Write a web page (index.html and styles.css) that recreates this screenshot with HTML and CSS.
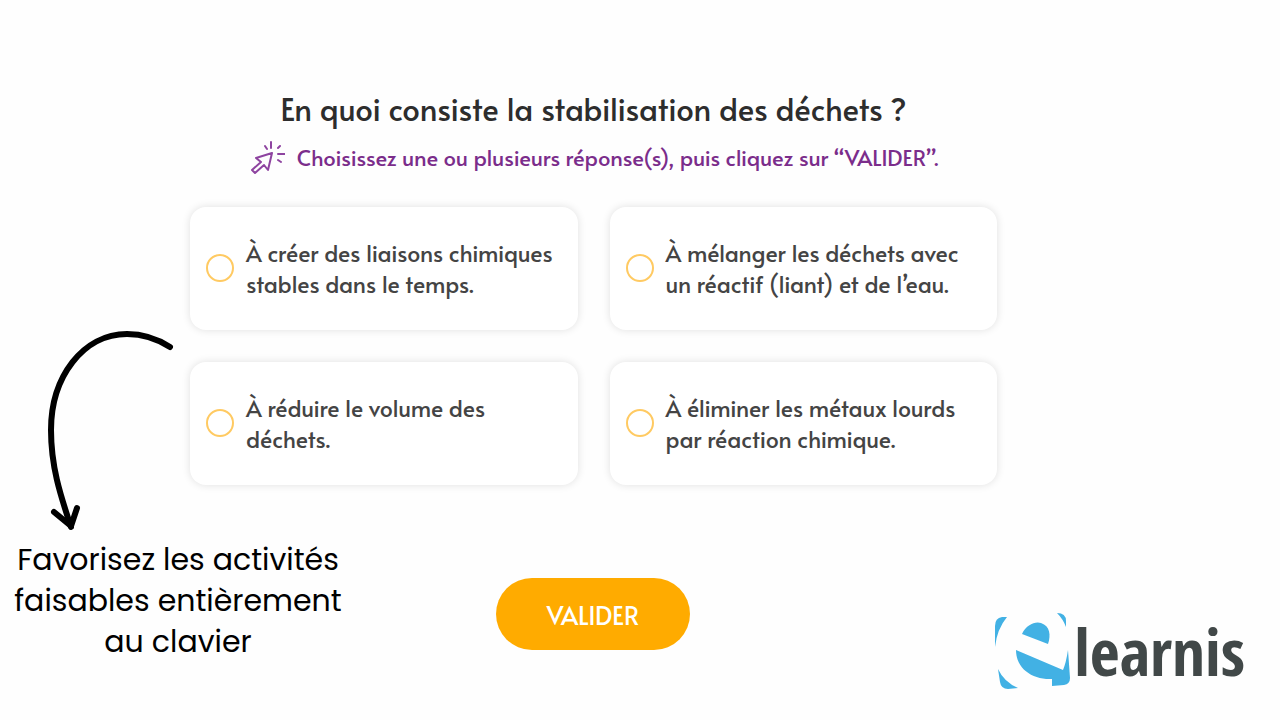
FILE: index.html
```html
<!DOCTYPE html>
<html lang="fr">
<head>
  <meta charset="UTF-8">
  <meta name="viewport" content="width=device-width, initial-scale=1.0">
  <title>La stabilisation des déchets</title>
  <link rel="stylesheet" href="styles.css">
</head>
<body>
  <form class="page">
    <!-- Question -->
    <div class="activity">
      <svg class="arrow" viewBox="0 0 130 204" fill="none" stroke="#000" stroke-width="6" stroke-linecap="round" stroke-linejoin="round" aria-hidden="true">
        <path d="M125 20C111 11 98 7 82 7C38 7 6 50 6 103C6 139 15 167 26 200"/>
        <path d="M9 185L26 199L32 181"/>
      </svg>

      <main class="quiz">
        <h1>En quoi consiste la stabilisation des déchets ?</h1>
        <p class="instruction">
          <svg class="click-icon" viewBox="0 0 36 36" fill="none" stroke="#8e44a0" stroke-width="2" stroke-linejoin="round" stroke-linecap="round" aria-hidden="true">
            <path d="M23 14L7 19L12 23L3 31L6 34L15 26L19 31Z"/>
            <path d="M22 3V9M16 7L18 10M31 7L29 9M29 15H36M29 21L32 23"/>
          </svg>
          Choisissez une ou plusieurs réponse(s), puis cliquez sur “VALIDER”.
        </p>

        <div class="answers">
          <label class="answer">
            <input type="checkbox" name="reponse" value="1">
            <span>À créer des liaisons chimiques stables dans le temps.</span>
          </label>
          <label class="answer">
            <input type="checkbox" name="reponse" value="2">
            <span>À mélanger les déchets avec un réactif (liant) et de l’eau.</span>
          </label>
          <label class="answer">
            <input type="checkbox" name="reponse" value="3">
            <span>À réduire le volume des déchets.</span>
          </label>
          <label class="answer">
            <input type="checkbox" name="reponse" value="4">
            <span>À éliminer les métaux lourds par réaction chimique.</span>
          </label>
        </div>
      </main>
    </div>

    <!-- Note, button and logo -->
    <footer class="bottom">
      <p class="note">Favorisez les activités<br>faisables entièrement<br>au clavier</p>
      <button type="button" class="validate-btn">VALIDER</button>
      <div class="logo">
        <svg class="logo-mark" viewBox="0 0 78 78" fill="#42b1e4" aria-hidden="true">
          <path d="M1 35V14Q1 6 8 5L13 5Q3 17 1 35Z"/>
          <path d="M63 1Q72 1 72 9V15Q69 7 63 1Z"/>
          <path d="M28 22C32 13 41 9 47 11C56 14 57 23 54 32Z"/>
          <path d="M22 38L69 58Q72 51 74 38L76 66Q76 72 70 73L58 74V67C39 68 22 57 22 38Z"/>
          <path d="M4 57Q10 70 24 76L14 77Q7 77 6 70Z"/>
        </svg>
        <span class="logo-text">learnis</span>
      </div>
    </footer>
  </form>
</body>
</html>
```

FILE: styles.css
```css
:root {
  --orange: #ffab00;
  --purple: #7b2d8b;
  --text: #444;
  --white: #fefefe;
}

* {
  margin: 0;
  padding: 0;
  box-sizing: border-box;
}

body {
  background: var(--white);
  color: var(--text);
  font-family: "Alata", "Lato", sans-serif;
}

/* Question */
.activity {
  display: grid;
  grid-template-columns: 190fr 807fr 283fr;
  padding-top: 87px;
}

.arrow {
  width: 130px;
  height: 204px;
  margin-left: 45px;
  align-self: end;
}

.quiz {
  padding-bottom: 46px;
}

.quiz h1 {
  color: #2d2d2d;
  font-size: 31px;
  font-weight: 500;
  line-height: 44px;
  text-align: center;
}

.instruction {
  display: flex;
  align-items: center;
  justify-content: center;
  gap: 12px;
  margin: 7px 0 31px;
  color: var(--purple);
  font-size: 22px;
  font-weight: 500;
  line-height: 38px;
}

.click-icon {
  width: 36px;
  height: 36px;
}

/* Answers */
.answers {
  display: grid;
  grid-template-columns: 1fr 1fr;
  gap: 32px;
}

.answer {
  display: flex;
  align-items: center;
  gap: 12px;
  min-height: 123px;
  padding: 15px 16px 17px;
  background: #fff;
  border-radius: 16px;
  box-shadow: 0 0 8px rgba(0, 0, 0, 0.12);
  font-size: 23px;
  font-weight: 500;
  line-height: 31px;
  cursor: pointer;
}

.answer input {
  appearance: none;
  flex: none;
  width: 28px;
  height: 28px;
  border: 2px solid #ffca62;
  border-radius: 50%;
}

.answer input:checked {
  background: var(--orange);
}

/* Bottom */
.bottom {
  display: grid;
  grid-template-columns: 178fr 237fr 225fr;
  padding-top: 8px;
}

.note {
  color: #000;
  font-family: "Poppins", "Inter", sans-serif;
  font-size: 30px;
  line-height: 41px;
  text-align: center;
}

.validate-btn {
  justify-self: center;
  align-self: start;
  width: 194px;
  height: 72px;
  margin-top: 39px;
  border: none;
  border-radius: 36px;
  background: var(--orange);
  color: #fff;
  font-family: inherit;
  font-size: 25px;
  font-weight: 500;
  cursor: pointer;
}

/* Logo */
.logo {
  display: flex;
  align-items: center;
  justify-content: flex-end;
  align-self: start;
  gap: 2px;
  margin-top: 73px;
  padding-right: 35px;
}

.logo-mark {
  width: 78px;
  height: 78px;
}

.logo-text {
  color: #414848;
  font-family: "Noto Sans Condensed", "Open Sans Condensed", "Fira Sans Condensed", "PT Sans Narrow", "Lato", sans-serif;
  font-size: 65px;
  font-weight: 500;
  line-height: 74px;
}
```
